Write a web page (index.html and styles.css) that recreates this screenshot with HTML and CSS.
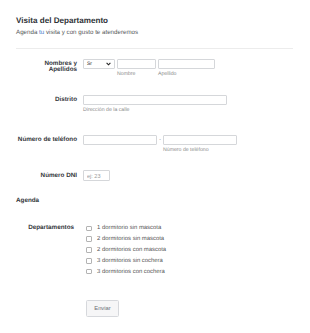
FILE: index.html
```html
<!DOCTYPE html>
<html lang="es">
<head>
<meta charset="utf-8">
<title>Visita del Departamento</title>
<link rel="stylesheet" href="styles.css">
</head>
<body>
<div class="page">
  <div class="header">
    <h1 class="title">Visita del Departamento</h1>
    <p class="subtitle">Agenda <span class="accent">tu</span> visita y con gusto te atenderemos</p>
  </div>
  <div class="divider"></div>

  <div class="row row-name">
    <div class="label two-line">Nombres y<br>Apellidos</div>
    <div class="field">
      <div class="inline">
        <div class="select">
          <span>Sr</span>
          <svg class="chev" width="5" height="4" viewBox="0 0 5 4"><polyline points="0.6,0.8 2.5,2.8 4.4,0.8" fill="none" stroke="#222" stroke-width="1.1"/></svg>
        </div>
        <div class="sub-wrap">
          <input class="input w-first" type="text">
          <span class="sublabel">Nombre</span>
        </div>
        <div class="sub-wrap">
          <input class="input w-last" type="text">
          <span class="sublabel">Apellido</span>
        </div>
      </div>
    </div>
  </div>

  <div class="row row-district">
    <div class="label">Distrito</div>
    <div class="field">
      <input class="input w-district" type="text">
      <span class="sublabel">Dirección de la calle</span>
    </div>
  </div>

  <div class="row row-phone">
    <div class="label">Número de teléfono</div>
    <div class="field">
      <div class="inline">
        <input class="input w-phone" type="text">
        <span class="dash">-</span>
        <div class="sub-wrap">
          <input class="input w-phone" type="text">
          <span class="sublabel">Número de teléfono</span>
        </div>
      </div>
    </div>
  </div>

  <div class="row row-dni">
    <div class="label">Número DNI</div>
    <div class="field">
      <input class="input w-dni" type="text" placeholder="ej: 23">
    </div>
  </div>

  <div class="section">Agenda</div>

  <div class="row row-deps">
    <div class="label label-deps">Departamentos</div>
    <div class="field options">
      <label class="option"><input type="checkbox" class="cb"><span>1 dormitorio sin mascota</span></label>
      <label class="option"><input type="checkbox" class="cb"><span>2 dormitorios sin mascota</span></label>
      <label class="option"><input type="checkbox" class="cb"><span>2 dormitorios con mascota</span></label>
      <label class="option"><input type="checkbox" class="cb"><span>3 dormitorios sin cochera</span></label>
      <label class="option"><input type="checkbox" class="cb"><span>3 dormitorios con cochera</span></label>
    </div>
  </div>

  <div class="row row-submit">
    <div class="label"></div>
    <div class="field">
      <button class="button" type="button">Enviar</button>
    </div>
  </div>
</div>
</body>
</html>
```

FILE: styles.css
```css
html, body {
  margin: 0;
  padding: 0;
  background: #ffffff;
}

body {
  font-family: "Liberation Sans", Arial, sans-serif;
  color: #333333;
  text-rendering: geometricPrecision;
}

.page {
  padding: 0 17px 0 16px;
}

.header {
  padding-top: 16px;
}

.title {
  margin: 0;
  font-size: 8.1px;
  line-height: 10px;
  font-weight: bold;
  color: #2f3337;
}

.subtitle {
  margin: 3px 0 0;
  font-size: 6.2px;
  line-height: 8px;
  color: #57595c;
}

.accent {
  color: #3b78c9;
}

.divider {
  margin-top: 11px;
  border-top: 1px solid #ececec;
}

.row {
  display: grid;
  grid-template-columns: 61px 1fr;
  column-gap: 6px;
}

.label {
  text-align: right;
  font-size: 6.3px;
  line-height: 10px;
  font-weight: bold;
  color: #34373b;
}

.label.two-line {
  line-height: 6.6px;
  padding-top: 1.6px;
}

.field {
  display: flex;
  flex-direction: column;
  align-items: flex-start;
}

.inline {
  display: flex;
  align-items: flex-start;
  gap: 2px;
}

.sub-wrap {
  display: flex;
  flex-direction: column;
}

.input {
  box-sizing: border-box;
  height: 10px;
  margin: 0;
  padding: 0 3px;
  border: 1px solid #d5d7da;
  border-radius: 1px;
  background: #fff;
  font-family: "Liberation Sans", Arial, sans-serif;
  font-size: 5.5px;
  color: #333;
  outline: none;
}

.input::placeholder {
  color: #9a9a9a;
}

.select {
  box-sizing: border-box;
  width: 32px;
  height: 10px;
  border: 1px solid #d5d7da;
  border-radius: 1px;
  display: flex;
  align-items: center;
  justify-content: space-between;
  padding: 0 3.5px 0 3px;
  font-size: 5px;
  color: #333;
}

.chev {
  display: block;
}

.w-first { width: 39px; }
.w-last { width: 57px; }
.w-district { width: 144px; }
.w-phone { width: 74px; }
.w-dni { width: 27px; height: 11px; }

.sublabel {
  margin-top: 2px;
  font-size: 5.2px;
  line-height: 6px;
  color: #8c8c8c;
}

.dash {
  width: 2px;
  padding-top: 2.5px;
  font-size: 5px;
  line-height: 5px;
  color: #777;
  text-align: center;
}

.row-name { margin-top: 10px; }
.row-district { margin-top: 18px; }
.row-phone { margin-top: 22px; }
.row-dni { margin-top: 17px; }

.row-dni .label {
  line-height: 11px;
}

.section {
  margin-top: 16px;
  font-size: 6.3px;
  line-height: 8px;
  font-weight: bold;
  color: #34373b;
}

.row-deps { margin-top: 18px; }

.label-deps {
  line-height: 10.8px;
  padding-right: 3px;
}

.options {
  padding-left: 3px;
}

.option {
  display: flex;
  align-items: center;
  gap: 5.5px;
  height: 10.8px;
  font-size: 5.9px;
  color: #555555;
}

.cb {
  appearance: none;
  -webkit-appearance: none;
  box-sizing: border-box;
  width: 5.5px;
  height: 5.5px;
  margin: 0;
  border: 1px solid #b3b3b3;
  border-radius: 1px;
  background: #fff;
  flex: none;
}

.row-submit { margin-top: 23px; }

.button {
  margin-left: 3px;
  box-sizing: border-box;
  width: 33px;
  height: 17px;
  padding: 0;
  border: 1px solid #d6d8dc;
  border-radius: 1.5px;
  background: #f6f6f7;
  font-family: "Liberation Sans", Arial, sans-serif;
  font-size: 5.8px;
  color: #6b6f77;
}
```
